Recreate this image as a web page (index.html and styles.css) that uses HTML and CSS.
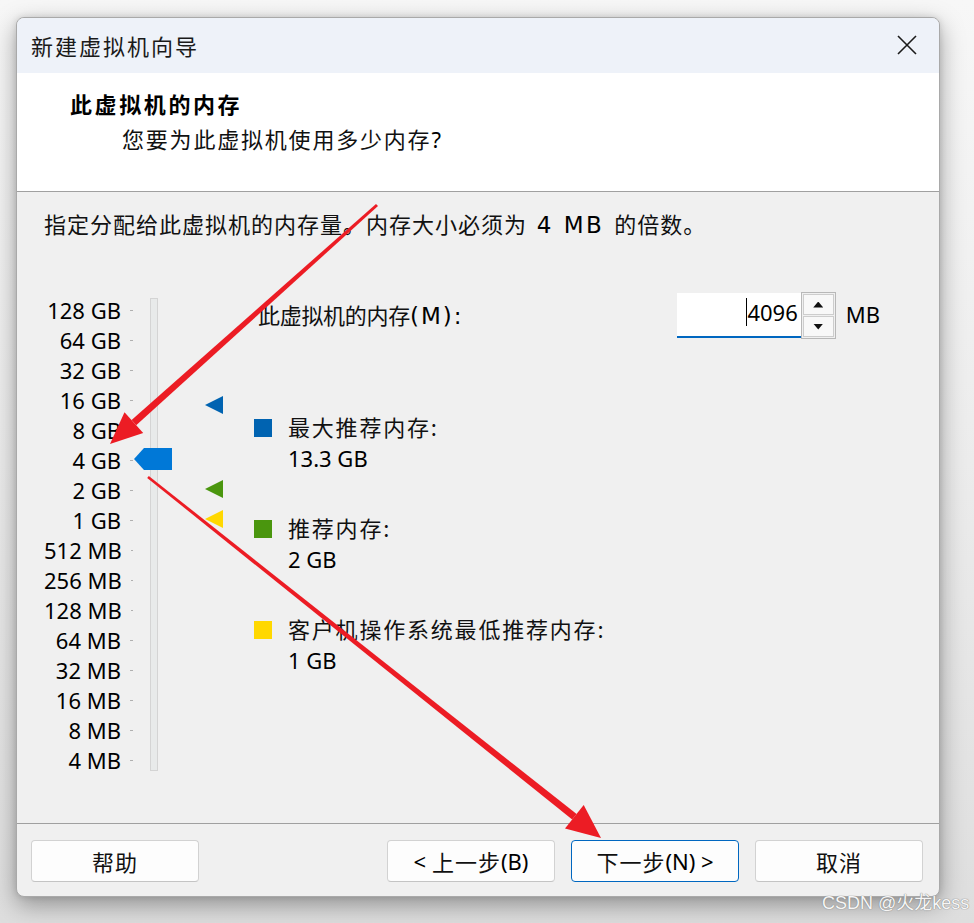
FILE: index.html
```html
<!DOCTYPE html>
<html lang="zh-CN">
<head>
<meta charset="utf-8">
<title>新建虚拟机向导</title>
<link rel="stylesheet" href="styles.css">
</head>
<body>
<div class="window">
  <div class="titlebar">
    <span class="title zh">新建虚拟机向导</span>
    <span class="close"><svg width="20" height="20" viewBox="0 0 20 20"><path d="M1 1L19 19M19 1L1 19" stroke="#1b1b1b" stroke-width="1.6" fill="none"/></svg></span>
  </div>
  <div class="header">
    <div class="h-title"><span class="zh">此虚拟机的内存</span></div>
    <div class="h-sub"><span class="zh">您要为此虚拟机使用多少内存</span>?</div>
  </div>
  <div class="content">
    <p class="instr"><span class="zh">指定分配给此虚拟机的内存量。内存大小必须为</span><span class="wide"> 4 MB </span><span class="zh">的倍数。</span></p>
    <div class="main">
      <div class="slider">
        <ul class="scale">
          <li>128 GB</li>
          <li>64 GB</li>
          <li>32 GB</li>
          <li>16 GB</li>
          <li>8 GB</li>
          <li>4 GB</li>
          <li>2 GB</li>
          <li>1 GB</li>
          <li>512 MB</li>
          <li>256 MB</li>
          <li>128 MB</li>
          <li>64 MB</li>
          <li>32 MB</li>
          <li>16 MB</li>
          <li>8 MB</li>
          <li>4 MB</li>
        </ul>
        <div class="track">
          <span class="thumb"></span>
          <span class="mark mark-max"></span>
          <span class="mark mark-rec"></span>
          <span class="mark mark-min"></span>
        </div>
      </div>
      <div class="panel">
        <div class="mem-row">
          <span class="mem-label"><span class="zh">此虚拟机的内存</span><span class="wide">(M):</span></span>
          <div class="spin">
            <div class="spin-input"><span class="caret"></span>4096</div>
            <div class="spin-btns"><span class="up"></span><span class="down"></span></div>
          </div>
          <span class="unit">MB</span>
        </div>
        <div class="legend">
          <div class="item">
            <span class="sq sq-max"></span>
            <div><div><span class="zh">最大推荐内存:</span></div><div>13.3 GB</div></div>
          </div>
          <div class="item">
            <span class="sq sq-rec"></span>
            <div><div><span class="zh">推荐内存:</span></div><div>2 GB</div></div>
          </div>
          <div class="item">
            <span class="sq sq-min"></span>
            <div><div><span class="zh">客户机操作系统最低推荐内存:</span></div><div>1 GB</div></div>
          </div>
        </div>
      </div>
    </div>
  </div>
  <div class="footer">
    <button class="btn help"><span class="zh">帮助</span></button>
    <button class="btn">&lt;&nbsp;<span class="zh">上一步</span>(B)</button>
    <button class="btn primary"><span class="zh">下一步</span>(N)&nbsp;&gt;</button>
    <button class="btn"><span class="zh">取消</span></button>
  </div>
</div>

<svg class="arrows" width="974" height="923" viewBox="0 0 974 923">
  <polygon points="376,203.9 378,206.1 136.2,425.2 131.6,420" fill="#ec1c24"/>
  <polygon points="110,444 143.2,433 124.5,412.2" fill="#ec1c24"/>
  <polygon points="147.2,478 148.8,476 576.6,814.1 572.2,819.5" fill="#ec1c24"/>
  <polygon points="601,838 565,828.5 583.7,805.1" fill="#ec1c24"/>
</svg>

<div class="watermark">CSDN @火龙kess</div>
</body>
</html>
```

FILE: styles.css
```css
* { box-sizing: border-box; }
html, body { margin: 0; padding: 0; }
body {
  width: 974px;
  height: 923px;
  position: relative;
  overflow: hidden;
  background: linear-gradient(180deg, #f7f7f7 0%, #ececec 50%, #dedede 100%);
  font-family: "Noto Sans", "Noto Sans CJK SC", sans-serif;
  font-size: 22px;
  line-height: 30px;
  color: #000;
  padding: 17px 0 0 16px;
}
.zh {
  font-family: "Noto Sans CJK SC", sans-serif;
  font-size: 22px;
  line-height: 1;
  letter-spacing: 1.6px;
  color: #111;
}
.wide {
  font-family: "DejaVu Sans", sans-serif;
  font-size: 23px;
  line-height: 1;
  letter-spacing: 2px;
}
.window {
  width: 924px;
  height: 880px;
  border: 1px solid #a9a9a9;
  border-radius: 8px;
  overflow: hidden;
  background: #f0f0f0;
  display: flex;
  flex-direction: column;
  box-shadow: 0 8px 24px rgba(0, 0, 0, .35), 0 0 6px rgba(0, 0, 0, .12);
}
.titlebar {
  height: 55px;
  flex: none;
  background: #eef2f9;
  display: flex;
  align-items: center;
  padding: 0 22px 2px 14px;
}
.title { letter-spacing: 2px; color: #1a1a1a; }
.close { margin-left: auto; width: 20px; height: 20px; display: flex; margin-top: 1px; }

.header {
  height: 119px;
  flex: none;
  background: #fff;
  border-bottom: 1px solid #a0a0a0;
  padding: 16px 0 0 53px;
}
.h-title { height: 30px; }
.h-title .zh { font-weight: bold; letter-spacing: 2.6px; color: #000; }
.h-sub { height: 30px; margin: 5px 0 0 52px; }
.h-sub .zh { letter-spacing: 1.8px; }

.content { flex: 1; padding: 17px 0 0 27px; }
.instr { margin: 0; height: 30px; white-space: nowrap; }
.instr .zh { letter-spacing: 1px; }
.instr .wide { letter-spacing: 2.5px; }

.main { display: flex; margin-top: 53px; }
.slider { display: flex; }
.scale { list-style: none; margin: 0; padding: 3px 0 0; width: 89px; }
.scale li {
  display: flex;
  justify-content: flex-end;
  align-items: center;
  height: 30px;
  white-space: nowrap;
}
.scale li::after {
  content: "";
  width: 3px;
  height: 1px;
  background: #b0b0b0;
  margin-left: 9px;
}
.track {
  position: relative;
  width: 8px;
  height: 473px;
  margin: 6px 0 0 17px;
  background: #e8eaea;
  border: 1px solid #d4d4d4;
}
.thumb {
  position: absolute;
  left: -17px;
  top: 149px;
  width: 38px;
  height: 22px;
  background: #0078d7;
  clip-path: polygon(0 50%, 10px 0, 100% 0, 100% 100%, 10px 100%);
}
.mark {
  position: absolute;
  left: 54px;
  width: 18px;
  height: 18px;
  clip-path: polygon(0 50%, 100% 0, 100% 100%);
}
.mark-max { top: 97px; background: #0063b1; }
.mark-rec { top: 181px; background: #4a960e; }
.mark-min { top: 211px; background: #ffd800; }

.panel { margin-left: 96px; width: 626px; display: flex; flex-direction: column; }
.mem-row { display: flex; align-items: center; height: 47px; }
.mem-label { padding-left: 4px; height: 30px; white-space: nowrap; margin-top: -1px; }
.mem-label .zh { letter-spacing: -0.3px; }
.spin { margin-left: auto; display: flex; height: 47px; }
.spin-input {
  width: 124px;
  margin: 1px 0;
  background: #fff;
  border-bottom: 2px solid #0067c0;
  display: flex;
  align-items: center;
  justify-content: flex-end;
  padding: 0 3px 5px 0;
}
.caret { width: 1px; height: 28px; background: #000; }
.spin-btns {
  width: 35px;
  border: 1px solid #b8b8b8;
  display: flex;
  flex-direction: column;
  gap: 1px;
  padding: 1px;
  background: #f0f0f0;
}
.spin-btns span {
  flex: 1;
  border: 1px solid #cdcdcd;
  background: #f8f8f8;
  display: flex;
  align-items: center;
  justify-content: center;
}
.spin-btns span::before { content: ""; width: 10px; height: 6px; background: #111; }
.up::before { clip-path: polygon(50% 0, 100% 100%, 0 100%); }
.down::before { clip-path: polygon(0 0, 100% 0, 50% 100%); }
.unit { margin-left: 10px; margin-top: -3px; }

.legend { display: flex; flex-direction: column; gap: 39px; margin-top: 73px; }
.item { display: grid; grid-template-columns: 34px auto; line-height: 31px; }
.item .zh { letter-spacing: 1.8px; }
.sq { width: 18px; height: 18px; margin-top: 6.5px; }
.sq-max { background: #0063b1; }
.sq-rec { background: #4a960e; }
.sq-min { background: #ffd800; }

.footer {
  height: 73px;
  flex: none;
  border-top: 1px solid #a0a0a0;
  display: flex;
  gap: 16px;
  padding: 16px 16px 0 14px;
}
.btn {
  width: 168px;
  height: 42px;
  border: 1px solid #d2d2d2;
  border-bottom-color: #c4c4c4;
  border-radius: 4px;
  background: #fdfdfd;
  display: flex;
  align-items: center;
  justify-content: center;
  font-family: "Noto Sans", "Noto Sans CJK SC", sans-serif;
  font-size: 22px;
  line-height: 30px;
  color: #000;
  padding: 0;
}
.btn .zh { letter-spacing: 1px; }
.btn.primary { border-color: #0067c0; }
.help { margin-right: auto; }

.arrows { position: absolute; left: 0; top: 0; pointer-events: none; }
.watermark {
  position: absolute;
  left: 822px;
  top: 891px;
  font-family: "Liberation Sans", "Noto Sans CJK SC", sans-serif;
  font-size: 18px;
  line-height: 24px;
  color: #f6f6f6;
  text-shadow: 0 0 1px #777, 0 0 1px #999;
  white-space: nowrap;
}
```
